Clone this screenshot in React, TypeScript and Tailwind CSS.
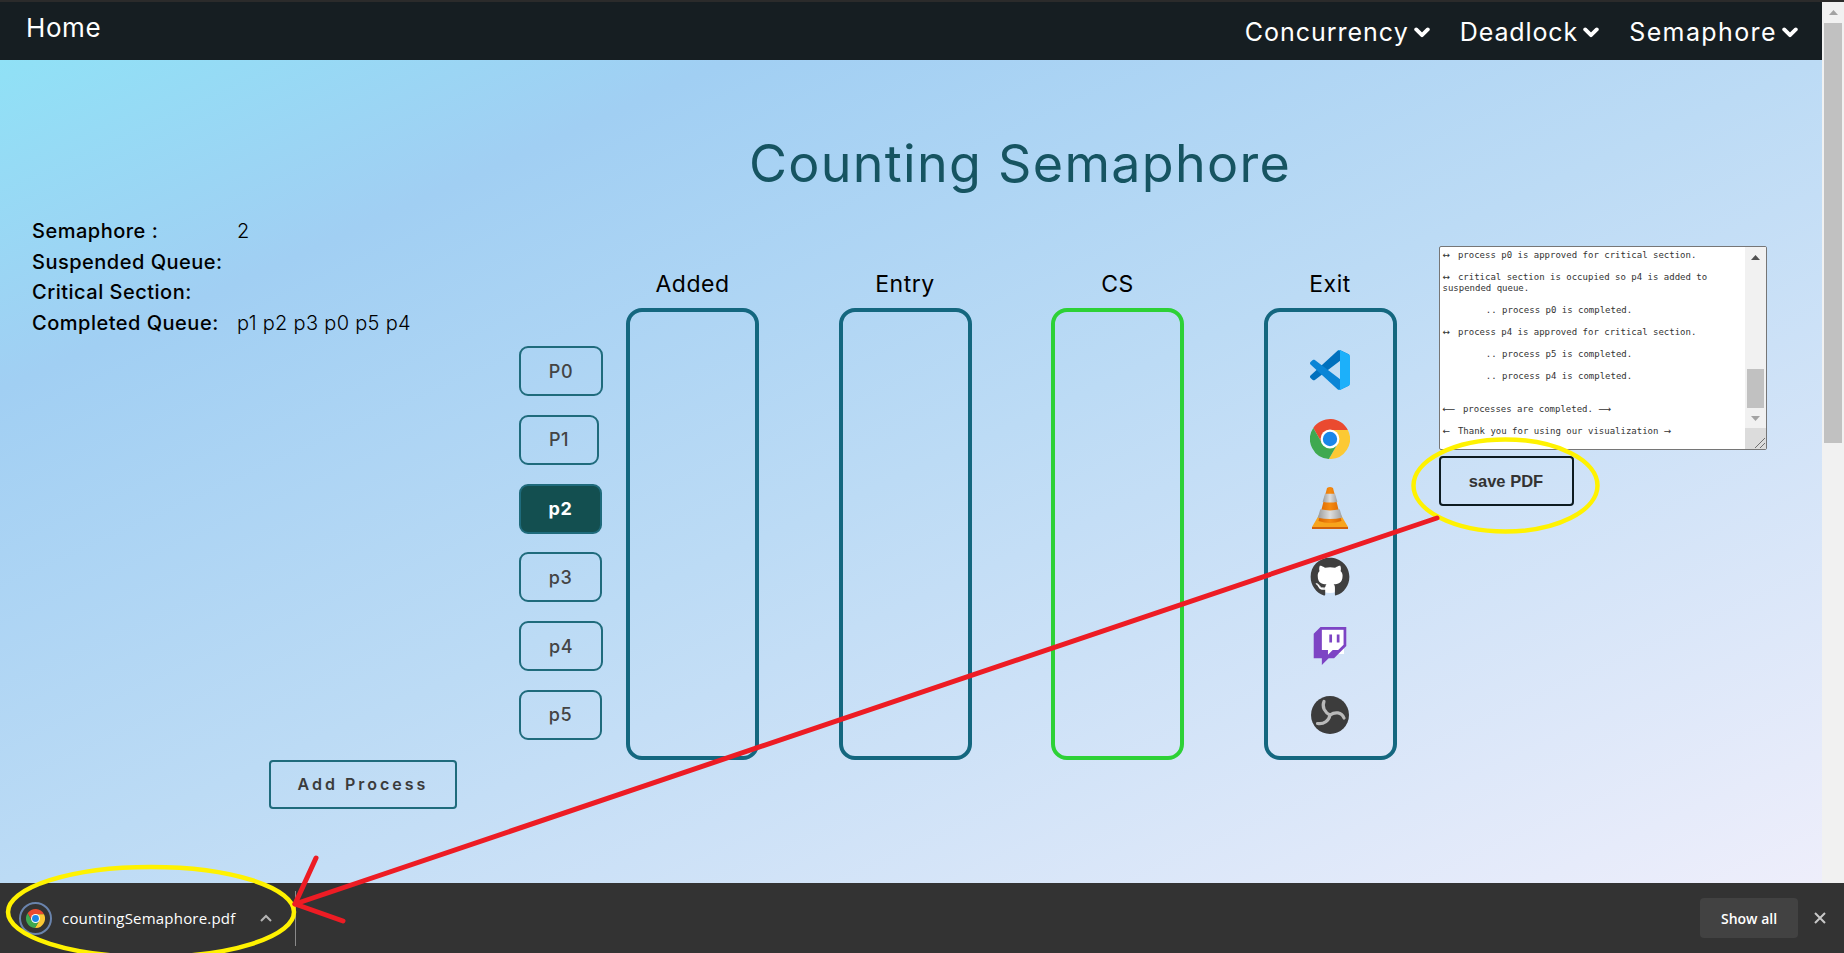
import React from 'react';
import { FaGithub } from 'react-icons/fa';
import { SiTwitch } from 'react-icons/si';

const Chevron: React.FC = () => (
  <svg width="16" height="11" viewBox="0 0 16 11" className="shrink-0">
    <path d="M2.2 2.4 L8 8.2 L13.8 2.4" fill="none" stroke="#fff" strokeWidth="3.8" strokeLinecap="round" strokeLinejoin="round" />
  </svg>
);

const ChromeLogo: React.FC<{ size: number }> = ({ size }) => (
  <svg width={size} height={size} viewBox="0 0 40 40" className="shrink-0">
    <path d="M20 11 L37.86 11 A20 20 0 0 0 3.28 9.03 L12.21 24.5 Z" fill="#ea4a30" />
    <path d="M27.79 24.5 L18.86 39.97 A20 20 0 0 0 37.86 11 L20 11 Z" fill="#fcc934" />
    <path d="M12.21 24.5 L3.28 9.03 A20 20 0 0 0 18.86 39.97 L27.79 24.5 Z" fill="#3fa950" />
    <circle cx="20" cy="20" r="9.4" fill="#fff" />
    <circle cx="20" cy="20" r="7.2" fill="#1a86e8" />
  </svg>
);

const VsCodeLogo: React.FC = () => (
  <svg width="40" height="40" viewBox="0 0 100 100">
    <path d="M96.46 10.8L75.86.88C73.47-.27 70.62.21 68.75 2.08L1.3 63.58C-.52 65.24-.51 68.09 1.3 69.75l5.51 5C8.3 76.1 10.53 76.2 12.13 74.99L93.36 13.37C96.09 11.3 100 13.25 100 16.67v-.24C100 14.03 98.62 11.84 96.46 10.8Z" fill="#0070bd" />
    <path d="M96.46 89.2L75.86 99.12C73.47 100.27 70.62 99.79 68.75 97.92L1.3 36.42C-.52 34.76-.51 31.91 1.3 30.25l5.51-5C8.3 23.9 10.53 23.8 12.13 25.01L93.36 86.63C96.09 88.7 100 86.75 100 83.33v.24C100 85.97 98.62 88.16 96.46 89.2Z" fill="#0a85d6" />
    <path d="M75.86 99.13C73.47 100.27 70.62 99.79 68.75 97.92 71.06 100.22 75 98.59 75 95.33V4.67C75 1.41 71.06-.22 68.75 2.08 70.62.21 73.47-.27 75.86.87L96.46 10.78C98.62 11.82 100 14.01 100 16.41V83.59C100 85.99 98.62 88.18 96.46 89.22Z" fill="#1cb0fa" />
  </svg>
);

const VlcLogo: React.FC = () => (
  <svg width="36" height="42" viewBox="0 0 36 42">
    <defs>
      <linearGradient id="vlcOrange" x1="0" x2="1" y1="0" y2="0">
        <stop offset="0" stopColor="#d96400" />
        <stop offset="0.5" stopColor="#f58a10" />
        <stop offset="1" stopColor="#d96400" />
      </linearGradient>
      <linearGradient id="vlcGrey" x1="0" x2="1" y1="0" y2="0">
        <stop offset="0" stopColor="#9a9a9a" />
        <stop offset="0.5" stopColor="#dedede" />
        <stop offset="1" stopColor="#a0a0a0" />
      </linearGradient>
    </defs>
    <path d="M7 28 L0 40 L36 40 L29 28 Z" fill="#f8a41c" />
    <rect x="0" y="40" width="36" height="2" fill="#d2620a" />
    <path d="M15 1 Q18 -1 21 1 L29.5 34 Q18 38 6.5 34 Z" fill="url(#vlcOrange)" />
    <path d="M13 6.7 L23 6.7 L25.4 14.7 Q18 16.5 10.6 14.7 Z" fill="url(#vlcGrey)" />
    <path d="M8.3 22.3 Q18 24.5 27.7 22.3 L30.2 30.7 Q18 33.5 5.8 30.7 Z" fill="url(#vlcGrey)" />
  </svg>
);

const ObsLogo: React.FC = () => (
  <svg width="40" height="40" viewBox="0 0 40 40">
    <circle cx="20" cy="20" r="19" fill="#3c3c3c" />
    <g fill="none" stroke="#b9b9b9" strokeWidth="3.2" strokeLinecap="round">
      <path d="M14 6.5 C11.5 12 15 17.5 20 20" />
      <path d="M20 20 C25 16.5 31.5 17 34 23" />
      <path d="M20 20 C19 25.5 14 29.5 7.5 28.5" />
    </g>
  </svg>
);

const TrackArrow: React.FC<{ down?: boolean; color: string }> = ({ down, color }) => (
  <svg width="9" height="5" viewBox="0 0 9 5" className={down ? 'rotate-180' : ''}>
    <path d="M4.5 0 L9 5 L0 5 Z" fill={color} />
  </svg>
);

const navItems = [
  { label: 'Concurrency', tracking: 'tracking-[1px]' },
  { label: 'Deadlock', tracking: 'tracking-[0.9px]' },
  { label: 'Semaphore', tracking: 'tracking-[1.4px]' },
];

const processes = [
  { name: 'P0', w: 'w-[84px]' },
  { name: 'P1', w: 'w-[80px]' },
  { name: 'p2', w: 'w-[83px]', active: true },
  { name: 'p3', w: 'w-[83px]' },
  { name: 'p4', w: 'w-[84px]' },
  { name: 'p5', w: 'w-[83px]' },
];

// arrows come from the proportional font, the rest of the log is mono
const Arrow: React.FC<{ glyph: string; long?: boolean }> = ({ glyph, long }) => (
  <span className={`inline-block font-['DejaVu_Sans',sans-serif] ${long ? 'w-[15px]' : 'w-[10px]'}`}>{glyph}</span>
);

const logLines: React.ReactNode[] = [
  <><Arrow glyph="↔" /> process p0 is approved for critical section.</>,
  '',
  <><Arrow glyph="↔" /> critical section is occupied so p4 is added to</>,
  'suspended queue.',
  '',
  '\t.. process p0 is completed.',
  '',
  <><Arrow glyph="↔" /> process p4 is approved for critical section.</>,
  '',
  '\t.. process p5 is completed.',
  '',
  '\t.. process p4 is completed.',
  '',
  '',
  <><Arrow glyph="⟵" long /> processes are completed. <Arrow glyph="⟶" long /></>,
  '',
  <><Arrow glyph="←" /> Thank you for using our visualization <Arrow glyph="→" /></>,
];

const Column: React.FC<{ title: string; green?: boolean; children?: React.ReactNode }> = ({ title, green, children }) => (
  <div className="w-[133px] flex flex-col items-center shrink-0">
    <div className="h-[38px] flex items-start text-[23px] leading-[28px] text-black tracking-[0.5px]">{title}</div>
    <div className={`w-full h-[452px] rounded-[16px] border-[4px] flex flex-col items-center pt-[38px] gap-[29px] ${green ? 'border-[#2dd136]' : 'border-[#14677f]'}`}>
      {children}
    </div>
  </div>
);

const App: React.FC = () => {
  return (
    <div className="relative w-[1844px] h-[953px] overflow-hidden flex flex-col bg-[#2a2a2a] font-[Inter,sans-serif]">
      <div className="h-[2px] bg-[#2b2b2b]" />

      <div className="flex-1 flex min-h-0">
        <div className="flex-1 flex flex-col min-w-0">
          <nav className="h-[58px] bg-[#161e22] flex items-start justify-between pl-[26px] pr-[24px] text-white text-[25px] leading-[30px]">
            <a className="mt-[11px] text-[26px] tracking-[0.6px]">Home</a>
            <div className="flex gap-[30px] mt-[15px]">
              {navItems.map((item) => (
                <a key={item.label} className={`flex items-center gap-[5px] ${item.tracking}`}>
                  {item.label}
                  <Chevron />
                </a>
              ))}
            </div>
          </nav>

          <main className="flex-1 flex flex-col min-h-0 bg-[linear-gradient(to_bottom_right,#90e1f6_0%,#a1cff3_20%,#bcdbf5_50%,#eeeefb_100%)]">
            <div className="h-[156px] pl-[218px] pt-[73px]">
              <h1 className="text-center text-[52px] leading-[62px] text-[#165461] tracking-[1.3px]">Counting Semaphore</h1>
            </div>

            <div className="flex items-start">
              <div className="w-[519px] shrink-0 pl-[32px]">
                <div className="text-[20px] leading-[30.5px] text-black tracking-[0.5px]">
                  <div className="flex"><span className="w-[205px] font-medium">Semaphore :</span><span className="font-light">2</span></div>
                  <div className="font-medium">Suspended Queue:</div>
                  <div className="font-medium">Critical Section:</div>
                  <div className="flex"><span className="w-[205px] font-medium">Completed Queue:</span><span className="font-light tracking-[0.3px]">p1 p2 p3 p0 p5 p4</span></div>
                </div>
                <button className="mt-[422px] ml-[237px] w-[188px] h-[49px] pb-[2px] rounded-[4px] border-[2px] border-[#1f6b7c] text-[16px] font-semibold tracking-[3px] text-[#3b3b3b]">
                  Add Process
                </button>
              </div>

              <div className="w-[107px] shrink-0 pt-[130px] flex flex-col items-start gap-[18.8px]">
                {processes.map((p) => (
                  <button
                    key={p.name}
                    className={`${p.w} h-[50px] rounded-[9px] border-[2px] border-[#1f6b7c] text-[18px] tracking-[0.6px] ${p.active ? 'bg-[#134f50] text-white font-bold' : 'text-[#444] font-medium'}`}
                  >
                    {p.name}
                  </button>
                ))}
              </div>

              <div className="flex gap-[79.5px] pt-[54px]">
                <Column title="Added" />
                <Column title="Entry" />
                <Column title="CS" green />
                <Column title="Exit">
                  <VsCodeLogo />
                  <ChromeLogo size={40} />
                  <div className="h-10 flex items-center"><VlcLogo /></div>
                  <div className="relative w-10 h-10">
                    <div className="absolute inset-[4px] rounded-full bg-white" />
                    <FaGithub className="relative text-[#3f3f3f]" size={40} />
                  </div>
                  <div className="relative w-10 h-10 flex items-center justify-center">
                    <div className="absolute left-[7px] top-[4px] w-[27px] h-[24px] bg-white" />
                    <SiTwitch className="relative text-[#7d44c4]" size={38} />
                  </div>
                  <ObsLogo />
                </Column>
              </div>

              <div className="ml-[42px] pt-[30px] shrink-0">
                <div className="w-[328px] h-[204px] bg-white rounded-[2px] border border-[#767676] flex overflow-hidden">
                  <div className="flex-1 pl-[3px] pt-[3px] font-['DejaVu_Sans_Mono',monospace] text-[9px] leading-[11px] text-[#333] whitespace-pre [tab-size:8]">
                    {logLines.map((line, i) => (
                      <div key={i} className="h-[11px]">{line}</div>
                    ))}
                  </div>
                  <div className="w-[21px] bg-[#f1f1f1] flex flex-col items-center">
                    <div className="h-[21px] flex items-center justify-center"><TrackArrow color="#505050" /></div>
                    <div className="mt-[101px] w-[17px] h-[39px] bg-[#c1c1c1]" />
                    <div className="h-[20px] flex items-center justify-center"><TrackArrow down color="#a3a3a3" /></div>
                    <div className="mt-auto w-full h-[21px] bg-[#dcdcdc] flex items-end justify-end">
                      <svg width="12" height="12" viewBox="0 0 12 12">
                        <path d="M1 11 L11 1 M6 11 L11 6" stroke="#707070" strokeWidth="1" />
                      </svg>
                    </div>
                  </div>
                </div>
                <button className="mt-[6px] block w-[135px] h-[50px] rounded-[4px] border-[2px] border-[#0d1b20] font-['Liberation_Sans',sans-serif] font-bold text-[16.5px] text-[#333]">
                  save PDF
                </button>
              </div>
            </div>
          </main>
        </div>

        <div className="w-[22px] shrink-0 bg-[#f1f1f1] flex flex-col items-center">
          <div className="h-[21px] flex items-center justify-center"><TrackArrow color="#a3a3a3" /></div>
          <div className="w-[18px] h-[420px] bg-[#c1c1c1]" />
        </div>
      </div>

      <div className="h-[70px] shrink-0 bg-[#333333] flex items-center pl-[19px] pr-[18px] font-['Open_Sans',sans-serif] text-white">
        <div className="w-[33px] h-[33px] rounded-full border-[2px] border-[#6a84ad] flex items-center justify-center shrink-0">
          <ChromeLogo size={19} />
        </div>
        <span className="ml-[10px] w-[197px] text-[15px] leading-[20px] tracking-[0.2px] shrink-0">countingSemaphore.pdf</span>
        <svg width="14" height="9" viewBox="0 0 14 9" className="shrink-0">
          <path d="M2 7 L7 2 L12 7" fill="none" stroke="#b5b5b5" strokeWidth="2" />
        </svg>
        <div className="ml-[22px] w-px h-[55px] bg-[#8a8a8a] shrink-0" />
        <div className="ml-auto w-[98px] h-[40px] rounded-[4px] bg-[#424242] flex items-center justify-center text-[14px] font-semibold">
          Show all
        </div>
        <svg width="12" height="12" viewBox="0 0 12 12" className="ml-[16px] shrink-0">
          <path d="M1 1 L11 11 M11 1 L1 11" stroke="#c8c8c8" strokeWidth="2" />
        </svg>
      </div>

      {/* hand drawn annotations on top of the screenshot */}
      <svg className="absolute inset-0 pointer-events-none" width="1844" height="953" viewBox="0 0 1844 953">
        <ellipse cx="1505.5" cy="485.5" rx="92" ry="46" fill="none" stroke="#fff200" strokeWidth="4.5" />
        <ellipse cx="151" cy="912" rx="143" ry="45" fill="none" stroke="#fff200" strokeWidth="4.5" />
        <path d="M1437 518 L295 904" stroke="#ed1c24" strokeWidth="5" strokeLinecap="round" fill="none" />
        <path d="M316 858 L295 904 L343 921" stroke="#ed1c24" strokeWidth="5" strokeLinecap="round" strokeLinejoin="round" fill="none" />
      </svg>
    </div>
  );
};

export default App;
